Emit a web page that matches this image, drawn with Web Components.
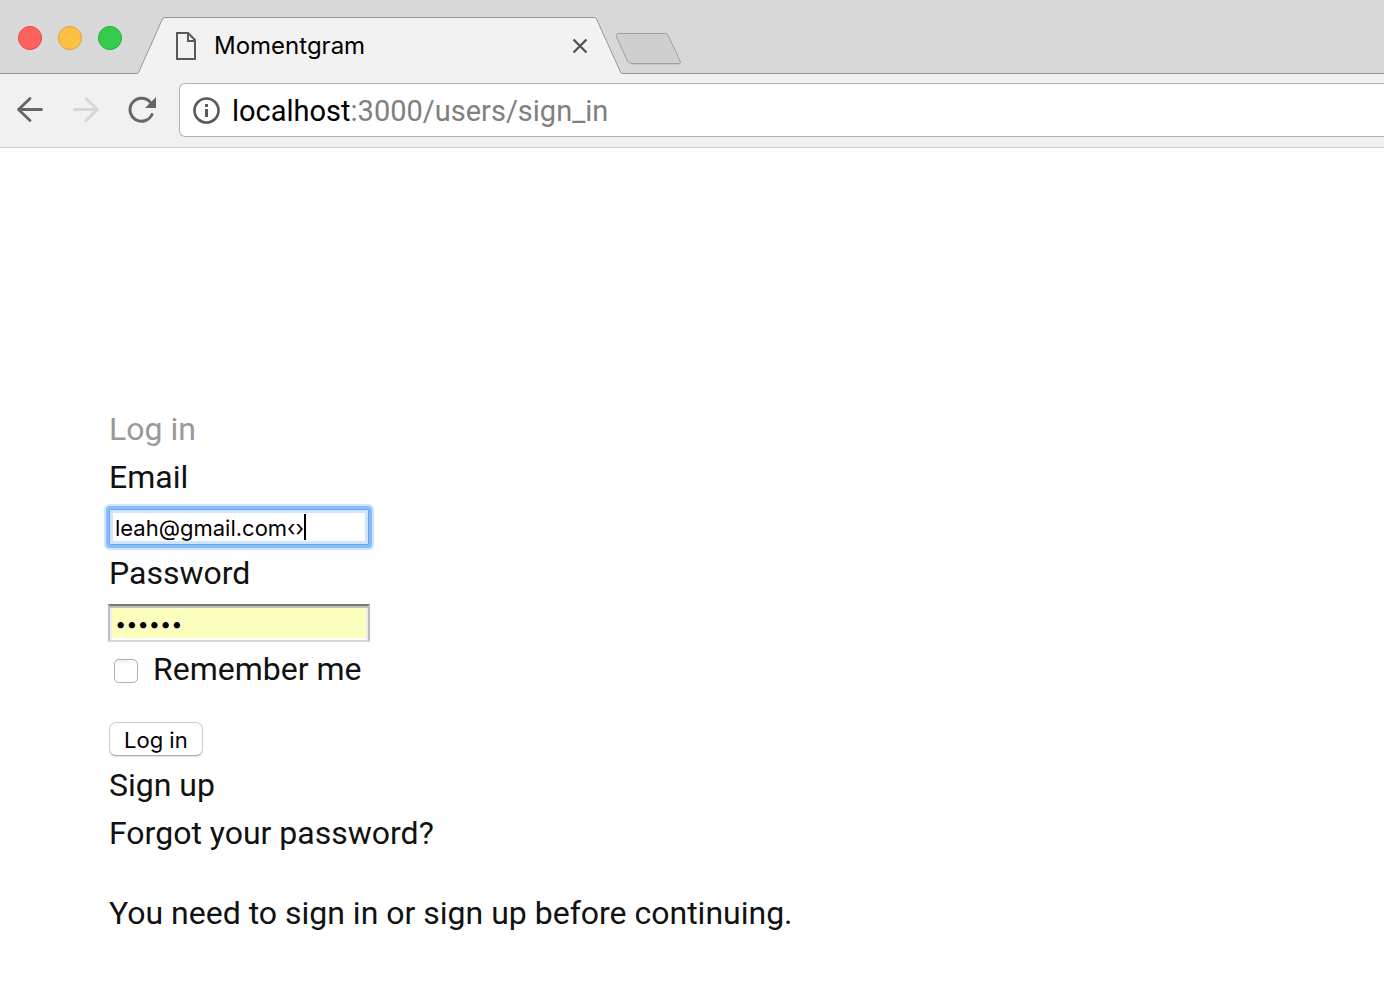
<!DOCTYPE html>
<html lang="en">
<head>
<meta charset="utf-8">
<title>Momentgram</title>
<style>
html, body { margin: 0; background: #fff; }
body { font-family: Roboto, "Liberation Sans", sans-serif; color: #111; min-height: 100vh; }
</style>
</head>
<body>
<browser-window>
  <tab-strip slot="tabs"><browser-tab>Momentgram</browser-tab></tab-strip>
  <tool-bar slot="toolbar"><address-bar host="localhost" path=":3000/users/sign_in"></address-bar></tool-bar>
  <login-page></login-page>
</browser-window>

<script>
const define = (name, html, setup) => {
  const template = document.createElement('template');
  template.innerHTML = html;
  customElements.define(name, class extends HTMLElement {
    constructor() {
      super();
      this.attachShadow({ mode: 'open' }).append(template.content.cloneNode(true));
    }
    connectedCallback() { if (setup) setup(this, this.shadowRoot); }
  });
};

define('browser-window', `
<style>
:host { display: flex; flex-direction: column; min-height: 100vh; overflow: hidden; }
</style>
<slot name="tabs"></slot><slot name="toolbar"></slot><slot></slot>`);

define('tab-strip', `
<style>
:host { display: flex; align-items: flex-end; height: 74px; background: #d8d8d8; box-shadow: inset 0 -1px #979797; }
.lights { display: flex; gap: 16px; padding: 0 16px 24px 18px; }
.lights button { width: 24px; height: 24px; padding: 0; border-radius: 50%; border: 1px solid #e2463f; background: #fe625d; }
.lights .min { border-color: #e1a033; background: #fec041; }
.lights .max { border-color: #1fad31; background: #34cc4a; }
.new { border: 0; padding: 0; margin: 0 0 8px -7px; background: none; display: flex; }
svg { display: block; }
</style>
<div class="lights">
  <button aria-label="Close window"></button>
  <button class="min" aria-label="Minimize"></button>
  <button class="max" aria-label="Zoom"></button>
</div>
<slot></slot>
<button class="new" aria-label="New tab">
  <svg width="67" height="34" viewBox="0 0 67 34"><path d="M4 1.500H50Q52 1.500 53.500 4L65 29Q66.500 31.500 64 31.500H17Q14 31.500 12.500 29L1.500 5Q.5 1.500 4 1.500Z" fill="#cfcfcf" stroke="#a0a0a0"/><path d="M16 32.500H64" stroke="#c8c8c8"/></svg>
</button>`);

define('browser-tab', `
<style>
:host { display: flex; align-items: center; position: relative; box-sizing: border-box; width: 485px; height: 57px; margin-left: -1px; padding: 0 32px 0 39px; font: 24px/32px Inter, sans-serif; color: #000; }
.shape { position: absolute; inset: 0; }
.page, span, button { position: relative; }
.page { margin-right: 18px; flex: none; }
span { flex: 1; }
button { border: 0; background: none; padding: 0; display: flex; }
svg { display: block; }
</style>
<svg class="shape" width="485" height="57" viewBox="0 0 485 57"><path d="M0 57V56.500Q1 56.500 2 54.500L25 3Q26 .5 28 .5H457Q459 .5 460 3L483 54Q484 56.500 485 56.500V57Z" fill="#f2f2f2"/><path d="M0 56.500Q1 56.500 2 54.500L25 3Q26 .5 28 .5H457Q459 .5 460 3L483 54Q484 56.500 485 56.500" fill="none" stroke="#979797"/></svg>
<svg class="page" width="20" height="28" viewBox="0 0 20 28" fill="none" stroke="#5a5a5a" stroke-width="2"><path d="M1 1H12L19 8V27H1Z"/><path d="M12 1V9H19"/></svg>
<span><slot></slot></span>
<button aria-label="Close tab"><svg width="20" height="16" viewBox="0 0 20 16" stroke="#555" stroke-width="2.400"><path d="M3.500 1.500L16.500 14.500M16.500 1.500L3.500 14.500"/></svg></button>`);

define('tool-bar', `
<style>
:host { display: flex; align-items: center; box-sizing: border-box; height: 74px; padding: 9px 0 10px 15px; background: #f1f1f1; border-bottom: 1px solid #d2d2d2; }
nav { display: flex; gap: 26px; margin-right: 22px; }
button { border: 0; background: none; padding: 0; width: 30px; height: 30px; }
svg { display: block; }
::slotted(*) { flex: 1; }
</style>
<nav>
<button aria-label="Back"><svg width="30" height="30" viewBox="0 0 30 30" fill="none" stroke="#666" stroke-width="2.800" stroke-linecap="round" stroke-linejoin="round"><path d="M26.500 14.500H3.500M15 3.500L3.500 14.500L15 25.500"/></svg></button>
<button aria-label="Forward" disabled><svg width="30" height="30" viewBox="0 0 30 30" fill="none" stroke="#d6d6d6" stroke-width="2.800" stroke-linecap="round" stroke-linejoin="round"><path d="M3.500 14.500H26.500M15 3.500L26.500 14.500L15 25.500"/></svg></button>
<button aria-label="Reload"><svg width="30" height="30" viewBox="0 0 30 30"><path d="M25 19.500A11.500 11.500 0 1 1 23 7" fill="none" stroke="#666" stroke-width="3" stroke-linecap="round"/><path d="M29 2V13H18Z" fill="#666"/></svg></button>
</nav>
<slot></slot>`);

define('address-bar', `
<style>
:host { display: flex; align-items: center; box-sizing: border-box; height: 54px; padding-left: 12px; background: #fff; border: 1px solid #b4b4b4; border-right: 0; border-radius: 6px 0 0 6px; font-size: 29px; line-height: 40px; color: #808080; }
svg { display: block; margin-right: 12px; flex: none; }
b { font-weight: 400; color: #000; }
.url { outline: none; white-space: nowrap; padding-top: 2px; }
</style>
<svg width="28" height="28" viewBox="0 0 28 28"><circle cx="14.500" cy="14.500" r="12" fill="none" stroke="#5a5a5a" stroke-width="2.600"/><path d="M13 8h3v3h-3zM13 13h3v8h-3z" fill="#5a5a5a"/></svg>
<div class="url" role="textbox" aria-label="Address" contenteditable="true" spellcheck="false"><b></b><span></span></div>`,
(el, root) => {
  root.querySelector('b').textContent = el.getAttribute('host');
  root.querySelector('span').textContent = el.getAttribute('path');
});

define('login-page', `
<style>
:host { display: block; padding: 257px 109px 0; font-size: 32px; line-height: 48px; color: #111; }
h2, p { margin: 0; font: inherit; }
h2 { color: #999; }
label, a { display: block; }
a { color: inherit; text-decoration: none; width: fit-content; }
.field { position: relative; display: flex; box-sizing: border-box; height: 48px; padding-top: 7px; margin-left: -1px; }
.box { box-sizing: border-box; width: 262px; height: 38px; margin: 0; outline: none; font: 22px/26px Inter, sans-serif; color: #000; }
#email { border: 1px solid #86bdfb; padding: 2px 6px 0; box-shadow: inset 0 0 0 1px #6aa5e8, inset 0 0 0 4px #cfe5fd, 0 0 0 2px #86bdfb, 0 0 0 4px #cfe5fd; border-radius: 2px; }
#password { border: 2px solid; border-color: #767676 #bcbcbc #d8d8d8; padding: 2px 5px 0; background: #faffbd; box-shadow: inset 0 2px #c0c0b4, inset 2px 0 #eeeeee, inset -2px 0 #eeeeee, inset 0 -2px #fff; font-size: 20px; }
.caret { position: absolute; left: 196px; top: 13px; width: 2px; height: 26px; background: #000; }
.remember { display: flex; align-items: center; gap: 15px; padding-left: 5px; }
.remember input { appearance: none; box-sizing: border-box; width: 24px; height: 24px; margin: 4px 0 0; border: 1px solid #b0b0b0; border-radius: 5px; background: linear-gradient(#f0f0f0, #fff 5px); }
button { display: block; box-sizing: border-box; height: 34px; margin: 29px 0 5px; padding: 2px 14px 0; border: 1px solid #cdcdcd; border-bottom-color: #b2b2b2; border-radius: 7px; background: #fff; box-shadow: 0 1px 1px #0002; font: 22px/30px Inter, sans-serif; color: #000; }
p { margin-top: 32px; }
</style>
<h2>Log in</h2>
<form>
<label for="email">Email</label>
<div class="field"><input class="box" id="email" type="text" value="leah@gmail.com‹›" spellcheck="false"><i class="caret"></i></div>
<label for="password">Password</label>
<div class="field"><input class="box" id="password" type="password" value="secret"></div>
<div class="remember"><input id="remember" type="checkbox"><label for="remember">Remember me</label></div>
<button type="button">Log in</button>
</form>
<a href="#signup">Sign up</a>
<a href="#forgot">Forgot your password?</a>
<p>You need to sign in or sign up before continuing.</p>`);
</script>
</body>
</html>
